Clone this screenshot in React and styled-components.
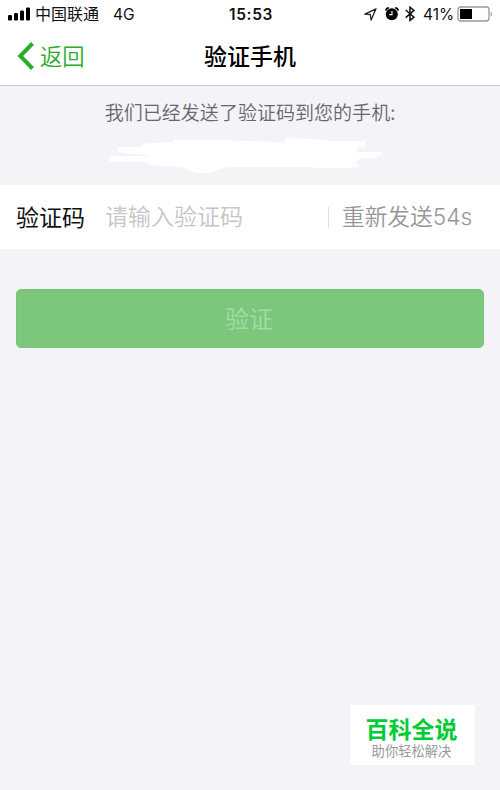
import React from 'react';
import styled, { createGlobalStyle } from 'styled-components';

const GlobalStyle = createGlobalStyle`
  * { box-sizing: border-box; }
  body {
    margin: 0;
    background: #f4f3f8;
    font-family: Inter, "Noto Sans CJK SC", sans-serif;
  }
`;

const Screen = styled.div`
  width: 500px;
  height: 790px;
  display: flex;
  flex-direction: column;
  overflow: hidden;
  background: #f4f3f8;
`;

const Header = styled.header`
  flex: none;
  height: 86px;
  background: #fff;
  border-bottom: 1px solid #c7c7cb;
`;

const StatusBar = styled.div`
  height: 28px;
  display: grid;
  grid-template-columns: 1fr auto 1fr;
  align-items: center;
  padding: 0 7px 0 8px;
  color: #111;
  font-size: 16px;
  line-height: 26px;
  white-space: nowrap;
`;

const StatusGroup = styled.div`
  display: flex;
  align-items: center;
  justify-content: ${(p) => (p.$end ? 'flex-end' : 'flex-start')};
  height: 28px;
`;

const Carrier = styled.span`
  margin: 0 14px 0 5px;
`;

const Network = styled.span`
  font-size: 15.5px;
  padding-top: 2px;
`;

const Clock = styled.span`
  padding: 2px 0 0 1px;
  font-size: 15.5px;
  font-weight: 600;
  letter-spacing: 0.65px;
`;

const Percent = styled.span`
  margin: 0 3px 0 7px;
  padding-top: 2px;
  font-size: 15.5px;
  letter-spacing: -0.1px;
`;

const Icon = styled.svg`
  display: block;
  flex: none;
  margin-left: ${(p) => p.$gap || 0}px;
`;

const NavBar = styled.nav`
  height: 56px;
  display: grid;
  grid-template-columns: 1fr auto 1fr;
  align-items: center;
  padding: 0 17px;
`;

const BackButton = styled.button`
  display: flex;
  align-items: center;
  gap: 6px;
  padding: 0;
  border: 0;
  background: none;
  color: #2aab2a;
  font: inherit;
  font-size: 22.3px;
  font-weight: 350;
  line-height: 30px;
`;

const BackText = styled.span`
  padding-top: 1px;
`;

const Title = styled.h1`
  margin: 0;
  padding-top: 1px;
  font-size: 23px;
  font-weight: 500;
  line-height: 30px;
  color: #000;
`;

const Notice = styled.section`
  flex: none;
  height: 99px;
  display: flex;
  flex-direction: column;
  align-items: center;
  padding-top: 12px;
`;

const Message = styled.p`
  margin: 0 0 12px;
  height: 28px;
  color: #68686b;
  font-family: "Noto Sans CJK SC", sans-serif;
  font-size: 19.05px;
  font-weight: 350;
  line-height: 28px;
  white-space: nowrap;
`;

const Scribble = styled(Icon)`
  margin-right: 9px;
`;

const CodeRow = styled.div`
  flex: none;
  height: 64px;
  display: flex;
  align-items: center;
  padding: 0 16px;
  background: #fff;
  font-size: 23px;
  line-height: 32px;
  white-space: nowrap;
`;

const Label = styled.label`
  width: 89px;
  padding-top: 1px;
  color: #111;
`;

const CodeInput = styled.input`
  width: 223px;
  height: 34px;
  padding: 0;
  border: 0;
  outline: 0;
  background: none;
  font: inherit;
  font-weight: 350;
  &::placeholder { color: #c5c5cb; opacity: 1; }
`;

const Resend = styled.button`
  display: flex;
  align-items: center;
  height: 21px;
  padding: 0 0 0 13px;
  border: 0;
  border-left: 1px solid #dcdcde;
  background: none;
  color: #969696;
  font: inherit;
  font-size: 22.7px;
  font-weight: 350;
`;

const Submit = styled.button`
  flex: none;
  height: 59px;
  margin: 40px 16px 0;
  padding: 2px 2px 0 0;
  border: 1px solid #76c379;
  border-radius: 5px;
  background: #7dc77d;
  color: #a6dba7;
  font: inherit;
  font-size: 24px;
  font-weight: 350;
  line-height: 55px;
`;

const Brand = styled.aside`
  width: 125px;
  height: 60px;
  margin: auto 25px 25px auto;
  display: flex;
  flex-direction: column;
  align-items: center;
  padding: 12px 2px 0 0;
  background: #fff;
  white-space: nowrap;
`;

const BrandName = styled.strong`
  font-size: 23px;
  line-height: 26px;
  font-weight: 700;
  color: #00cc33;
`;

const BrandLine = styled.span`
  font-size: 13.3px;
  line-height: 16px;
  color: #999;
`;

function Signal() {
  return (
    <Icon width="22" height="14" viewBox="0 0 22 14" fill="#000">
      <rect x="0" y="8" width="4" height="5.5" rx="1.2" />
      <rect x="6" y="6" width="4" height="7.5" rx="1.2" />
      <rect x="12" y="3.5" width="4" height="10" rx="1.2" />
      <rect x="18" y="0.5" width="4" height="13" rx="1.2" />
    </Icon>
  );
}

function LocationArrow() {
  return (
    <Icon width="13" height="13" viewBox="0 0 13 13" fill="none" stroke="#222" strokeWidth="1.3" strokeLinejoin="round">
      <path d="M12 0.8 L0.8 6.2 L6.3 6.5 L7.1 12 Z" />
    </Icon>
  );
}

function Alarm() {
  return (
    <Icon $gap={8} width="14" height="14" viewBox="0 0 14 14">
      <circle cx="6.8" cy="7.2" r="6" fill="#000" />
      <path d="M0.8 3.6 Q1.2 1.2 3.8 0.9 M10.2 0.9 Q12.8 1.2 13.2 3.6" fill="none" stroke="#000" strokeWidth="1.7" />
      <path d="M7 4 V7.6 H4.2" fill="none" stroke="#fff" strokeWidth="1.1" />
    </Icon>
  );
}

function Bluetooth() {
  return (
    <Icon $gap={6} width="11" height="16" viewBox="0 0 11 16" fill="none" stroke="#111" strokeWidth="1.5">
      <path d="M0.7 4 L9 11.2 L5 14.4 V1.2 L9 4.4 L0.7 11.6" />
    </Icon>
  );
}

function Battery() {
  return (
    <Icon width="36" height="16" viewBox="0 0 36 16">
      <rect x="1" y="1" width="31" height="14" rx="2.7" fill="#fff" stroke="#999" strokeWidth="1.3" />
      <rect x="3" y="3" width="12" height="10" fill="#000" />
      <path d="M33.7 5.4 Q36.5 8 33.7 10.6 Z" fill="#999" />
    </Icon>
  );
}

function Redaction() {
  return (
    <Scribble width="274" height="38" viewBox="0 0 274 38" fill="#fff">
      <path d="M9 9 H33 L34 6 L43 5 L65 4 V2 H114 L166 4 H176 V0 L204 1 L221 3 H256 V9 L248 10 V14 H272 L273 16 L264 20 L249 21 L247 24 L250 27 V29 L242 30 L209 30 L203 29 H119 L108 32 L101 35 H88 L79 32 L72 29 L53 28 L39 27 V24 H1 V18 H39 V17 L14 15 L9 13 Z" />
    </Scribble>
  );
}

export default function App() {
  return (
    <>
      <GlobalStyle />
      <Screen>
        <Header>
          <StatusBar>
            <StatusGroup>
              <Signal />
              <Carrier>中国联通</Carrier>
              <Network>4G</Network>
            </StatusGroup>
            <Clock>15:53</Clock>
            <StatusGroup $end>
              <LocationArrow />
              <Alarm />
              <Bluetooth />
              <Percent>41%</Percent>
              <Battery />
            </StatusGroup>
          </StatusBar>
          <NavBar>
            <BackButton>
              <Icon width="17" height="28" viewBox="0 0 17 28" fill="none" stroke="#2aab2a" strokeWidth="4">
                <path d="M15.5 1.5 L3.3 14 L15.5 26.5" />
              </Icon>
              <BackText>返回</BackText>
            </BackButton>
            <Title>验证手机</Title>
          </NavBar>
        </Header>
        <Notice>
          <Message>我们已经发送了验证码到您的手机:</Message>
          <Redaction />
        </Notice>
        <CodeRow>
          <Label htmlFor="code">验证码</Label>
          <CodeInput id="code" placeholder="请输入验证码" />
          <Resend>重新发送54s</Resend>
        </CodeRow>
        <Submit>验证</Submit>
        <Brand>
          <BrandName>百科全说</BrandName>
          <BrandLine>助你轻松解决</BrandLine>
        </Brand>
      </Screen>
    </>
  );
}
